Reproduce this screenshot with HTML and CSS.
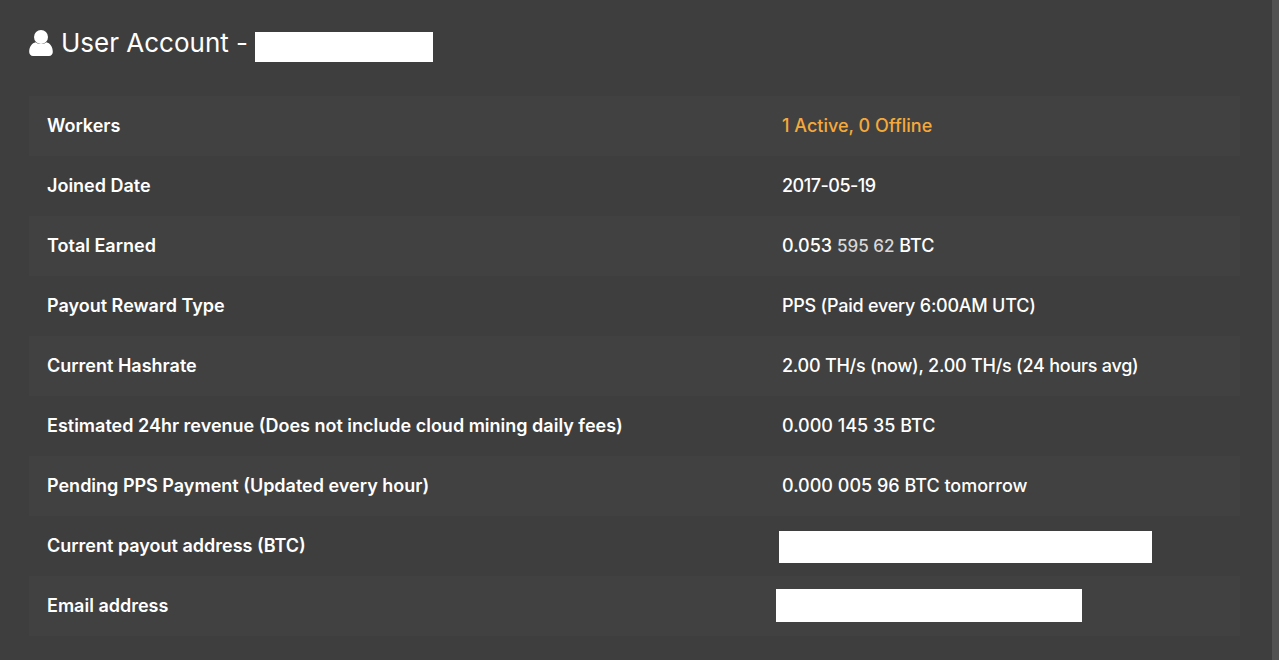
FILE: index.html
```html
<!DOCTYPE html>
<html lang="en">
<head>
<meta charset="utf-8">
<title>User Account</title>
<link rel="stylesheet" href="styles.css">
</head>
<body>
<div class="page">
  <h1 class="title">
    <svg class="user-icon" viewBox="0 0 24 26" aria-hidden="true"><circle cx="12" cy="7" r="7"/><path d="M.2 22c0-5.500 2.800-9 6.500-9.800 1.400 1.200 3.300 1.900 5.300 1.900s3.900-.7 5.300-1.900c3.700.8 6.500 4.300 6.500 9.800 0 2.200-1.600 4-3.800 4H4c-2.200 0-3.800-1.800-3.800-4z"/></svg>
    <span>User Account - a</span>
  </h1>
  <table class="info">
    <tbody>
      <tr><th>Workers</th><td class="accent">1 Active, 0 Offline</td></tr>
      <tr><th>Joined Date</th><td class="tight-date">2017-05-19</td></tr>
      <tr><th>Total Earned</th><td>0.053 <span class="dim">595 62</span> BTC</td></tr>
      <tr><th>Payout Reward Type</th><td class="tight">PPS (Paid every 6:00AM UTC)</td></tr>
      <tr><th>Current Hashrate</th><td class="tight">2.00 TH/s (now), 2.00 TH/s (24 hours avg)</td></tr>
      <tr><th>Estimated 24hr revenue (Does not include cloud mining daily fees)</th><td>0.000 145 35 BTC</td></tr>
      <tr><th>Pending PPS Payment (Updated every hour)</th><td>0.000 005 96 BTC tomorrow</td></tr>
      <tr><th>Current payout address (BTC)</th><td></td></tr>
      <tr><th>Email address</th><td></td></tr>
    </tbody>
  </table>
  <div class="redact redact-name"></div>
  <div class="redact redact-address"></div>
  <div class="redact redact-email"></div>
  <div class="scrollbar"></div>
</div>
</body>
</html>
```
FILE: styles.css
```css
html, body {
  margin: 0;
  height: 100%;
  overflow: hidden;
  background: #3e3e3e;
}
.page {
  position: relative;
  height: 660px;
  padding: 0 39px 0 29px;
  color: #fff;
  font-family: Inter, Lato, sans-serif;
  font-size: 18px;
}
.title {
  display: flex;
  align-items: center;
  height: 96px;
  margin: 0;
  padding-bottom: 12px;
  box-sizing: border-box;
  font-size: 26px;
  font-weight: 400;
  white-space: pre;
}
.user-icon {
  width: 24px;
  height: 26px;
  margin: 2px 8px 0 0;
  fill: #fff;
}
.info {
  width: 1211px;
  border-collapse: collapse;
  table-layout: fixed;
}
.info tr {
  height: 60px;
}
.info tr:nth-child(odd) {
  background: #414141;
}
.info th, .info td {
  padding: 0 18px 1px;
  text-align: left;
  white-space: nowrap;
}
.info th {
  width: 699px;
  font-weight: 600;
}
.info td {
  font-weight: 500;
}
.info .tight { letter-spacing: -0.24px; }
.info .tight-date { letter-spacing: -0.5px; }
.accent { color: #f5a93b; }
.dim { color: #d8d8d8; font-size: 17px; }
.redact {
  position: absolute;
  background: #fff;
}
.redact-name { left: 255px; top: 32px; width: 178px; height: 30px; }
.redact-address { left: 779px; top: 531px; width: 373px; height: 32px; }
.redact-email { left: 776px; top: 589px; width: 306px; height: 33px; }
.scrollbar {
  position: absolute;
  right: 0;
  top: 0;
  width: 7px;
  height: 100%;
  background: #525252;
}
```
